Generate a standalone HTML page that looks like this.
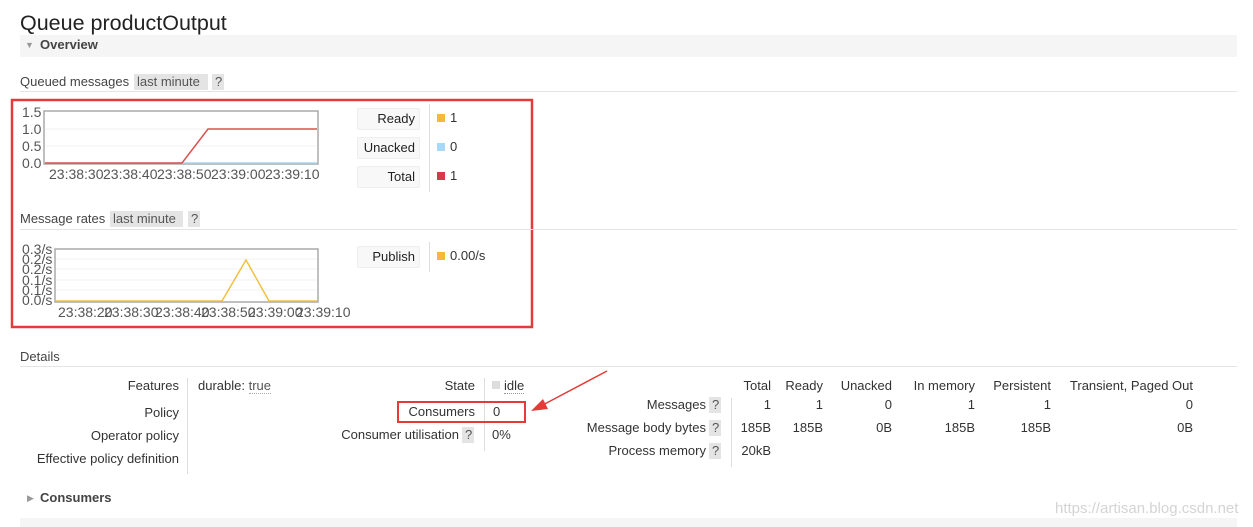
<!DOCTYPE html>
<html><head><meta charset="utf-8"><style>
body{margin:0;width:1253px;height:527px;background:#fff;position:relative;overflow:hidden;font-family:"Liberation Sans",sans-serif;font-size:13px;color:#333}
.a{position:absolute;white-space:nowrap;line-height:16px}
.r{text-align:right}
.q{position:absolute;background:#e4e4e4;line-height:16px;color:#555;padding:0 3px}
.hl{position:absolute;height:1px;background:#e4e4e4}
.vl{position:absolute;width:1px;background:#ddd}
.lb{position:absolute;background:#f8f8f8;border:1px solid #eee;border-radius:2px;text-align:right;line-height:20px;padding-right:4px;box-sizing:border-box;color:#222}
.sq{position:absolute;width:8px;height:8px}
</style></head><body>
<div class="a" style="left:20px;top:11px;font-size:21.5px;line-height:24px;color:#222">Queue productOutput</div>
<div style="position:absolute;left:20px;top:35px;width:1217px;height:22px;background:#f5f5f5"></div>
<div class="a" style="left:25px;top:37px;font-size:9px;color:#999">▼</div>
<div class="a" style="left:40px;top:37px;font-weight:bold;color:#444">Overview</div>

<div class="a" style="left:20px;top:74px;color:#444">Queued messages</div>
<div class="q" style="left:134px;top:74px;width:68px">last minute</div>
<div class="q" style="left:212px;top:74px;width:6px">?</div>
<div class="hl" style="left:20px;top:91px;width:1217px"></div>

<svg style="position:absolute;left:0;top:0" width="540" height="330">
<rect x="12" y="100" width="520" height="227" fill="none" stroke="#e53a3a" stroke-width="2.5"/>
<rect x="44" y="111" width="274" height="53" fill="#fff" stroke="#aaa" stroke-width="1.5"/>
<line x1="45" y1="129" x2="317" y2="129" stroke="#f0f0f0"/><line x1="45" y1="146" x2="317" y2="146" stroke="#f0f0f0"/>
<polyline points="176,163 317,163" stroke="#a8d8f0" stroke-width="1.5" fill="none"/>
<polyline points="45,163 182,163 208,129 317,129" stroke="#d9534f" stroke-width="1.5" fill="none"/>
<g font-family="Liberation Sans,sans-serif" font-size="14" fill="#555">
<text x="22" y="117">1.5</text><text x="22" y="134">1.0</text><text x="22" y="151">0.5</text><text x="22" y="168">0.0</text>
<text x="49" y="179">23:38:30</text><text x="103" y="179">23:38:40</text><text x="157" y="179">23:38:50</text><text x="211" y="179">23:39:00</text><text x="265" y="179">23:39:10</text>
</g>
<rect x="55" y="249" width="263" height="53" fill="#fff" stroke="#aaa" stroke-width="1.5"/>
<g stroke="#f0f0f0"><line x1="56" y1="259" x2="317" y2="259"/><line x1="56" y1="269" x2="317" y2="269"/><line x1="56" y1="280" x2="317" y2="280"/><line x1="56" y1="290" x2="317" y2="290"/></g>
<polyline points="56,301 222,301 246,260 269,301 317,301" stroke="#f0c040" stroke-width="1.5" fill="none"/>
<g font-family="Liberation Sans,sans-serif" font-size="14" fill="#555">
<text x="22" y="254">0.3/s</text><text x="22" y="264">0.2/s</text><text x="22" y="274">0.2/s</text><text x="22" y="285">0.1/s</text><text x="22" y="295">0.1/s</text><text x="22" y="305">0.0/s</text>
<text x="58" y="317">23:38:20</text><text x="104" y="317">23:38:30</text><text x="155" y="317">23:38:40</text><text x="201" y="317">23:38:50</text><text x="248" y="317">23:39:00</text><text x="296" y="317">23:39:10</text>
</g>
</svg>

<div class="lb" style="left:357px;top:108px;width:63px;height:22px">Ready</div>
<div class="lb" style="left:357px;top:137px;width:63px;height:22px">Unacked</div>
<div class="lb" style="left:357px;top:166px;width:63px;height:22px">Total</div>
<div class="vl" style="left:429px;top:104px;height:88px"></div>
<div class="sq" style="left:437px;top:114px;background:#f5b93a"></div><div class="a" style="left:450px;top:110px">1</div>
<div class="sq" style="left:437px;top:143px;background:#a8d8f5"></div><div class="a" style="left:450px;top:139px">0</div>
<div class="sq" style="left:437px;top:172px;background:#d9374a"></div><div class="a" style="left:450px;top:168px">1</div>

<div class="a" style="left:20px;top:211px;color:#444">Message rates</div>
<div class="q" style="left:110px;top:211px;width:67px">last minute</div>
<div class="q" style="left:188px;top:211px;width:6px">?</div>
<div class="hl" style="left:20px;top:229px;width:513px"></div>
<div class="hl" style="left:533px;top:229px;width:704px"></div>
<div class="lb" style="left:357px;top:246px;width:63px;height:22px">Publish</div>
<div class="vl" style="left:429px;top:242px;height:30px"></div>
<div class="sq" style="left:437px;top:252px;background:#f5b93a"></div><div class="a" style="left:450px;top:248px">0.00/s</div>

<div class="a" style="left:20px;top:349px;color:#444">Details</div>
<div class="hl" style="left:20px;top:366px;width:1217px"></div>

<div class="a r" style="left:20px;width:159px;top:378px">Features</div>
<div class="a r" style="left:20px;width:159px;top:405px">Policy</div>
<div class="a r" style="left:20px;width:159px;top:428px">Operator policy</div>
<div class="a r" style="left:20px;width:159px;top:451px">Effective policy definition</div>
<div class="vl" style="left:187px;top:378px;height:96px"></div>
<div class="a" style="left:198px;top:378px">durable: <span style="color:#555;border-bottom:1px dotted #aaa">true</span></div>

<div class="a r" style="left:300px;width:175px;top:378px">State</div>
<div class="a r" style="left:300px;width:175px;top:404px">Consumers</div>
<div class="a r" style="left:300px;width:159px;top:427px">Consumer utilisation</div>
<div class="q" style="left:462px;top:427px;width:6px">?</div>
<div class="vl" style="left:484px;top:378px;height:73px"></div>
<div class="sq" style="left:492px;top:381px;background:#ddd"></div>
<div class="a" style="left:504px;top:378px;border-bottom:1px dotted #999;line-height:15px">idle</div>
<div class="a" style="left:493px;top:404px">0</div>
<div class="a" style="left:492px;top:427px">0%</div>
<div style="position:absolute;left:397px;top:401px;width:129px;height:22px;border:2px solid #e53a3a;box-sizing:border-box"></div>
<svg style="position:absolute;left:525px;top:365px" width="90" height="55"><line x1="82" y1="6" x2="14" y2="42" stroke="#e53a3a" stroke-width="1.5"/><polygon points="6,46 18,34 23,44" fill="#e53a3a"/></svg>

<div class="a r" style="left:740px;width:31px;top:378px">Total</div>
<div class="a r" style="left:780px;width:43px;top:378px">Ready</div>
<div class="a r" style="left:830px;width:62px;top:378px">Unacked</div>
<div class="a r" style="left:900px;width:75px;top:378px">In memory</div>
<div class="a r" style="left:980px;width:71px;top:378px">Persistent</div>
<div class="a r" style="left:1060px;width:133px;top:378px">Transient, Paged Out</div>

<div class="a r" style="left:560px;width:146px;top:397px">Messages</div>
<div class="a r" style="left:560px;width:146px;top:420px">Message body bytes</div>
<div class="a r" style="left:560px;width:146px;top:443px">Process memory</div>
<div class="q" style="left:709px;top:397px;width:6px">?</div>
<div class="q" style="left:709px;top:420px;width:6px">?</div>
<div class="q" style="left:709px;top:443px;width:6px">?</div>
<div class="vl" style="left:731px;top:398px;height:69px"></div>

<div class="a r" style="left:720px;width:51px;top:397px">1</div><div class="a r" style="left:780px;width:43px;top:397px">1</div><div class="a r" style="left:830px;width:62px;top:397px">0</div><div class="a r" style="left:900px;width:75px;top:397px">1</div><div class="a r" style="left:980px;width:71px;top:397px">1</div><div class="a r" style="left:1060px;width:133px;top:397px">0</div>
<div class="a r" style="left:720px;width:51px;top:420px">185B</div><div class="a r" style="left:780px;width:43px;top:420px">185B</div><div class="a r" style="left:830px;width:62px;top:420px">0B</div><div class="a r" style="left:900px;width:75px;top:420px">185B</div><div class="a r" style="left:980px;width:71px;top:420px">185B</div><div class="a r" style="left:1060px;width:133px;top:420px">0B</div>
<div class="a r" style="left:720px;width:51px;top:443px">20kB</div>

<div class="a" style="left:27px;top:490px;font-size:9px;color:#999">▶</div>
<div class="a" style="left:40px;top:490px;font-weight:bold;color:#444">Consumers</div>
<div style="position:absolute;left:20px;top:518px;width:1217px;height:9px;background:#f5f5f5"></div>
<div class="a" style="left:1055px;top:501px;font-size:15px;color:#d4d4d4">https://artisan.blog.csdn.net</div>
</body></html>
